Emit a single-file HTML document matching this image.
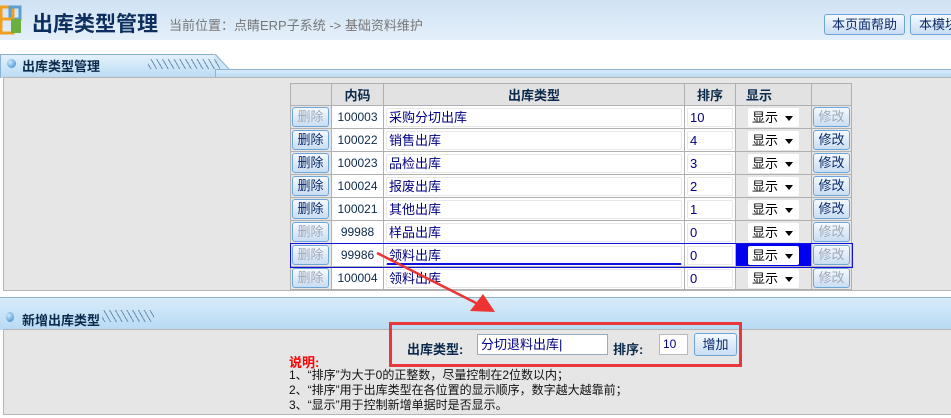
<!DOCTYPE html><html><head><meta charset="utf-8"><style>
*{margin:0;padding:0;box-sizing:border-box}
body{width:951px;height:418px;overflow:hidden;background:#fff;font-family:"Liberation Sans","Noto Sans CJK SC",sans-serif;font-size:12px;position:relative}
.abs{position:absolute}
.hdr{left:0;top:0;width:951px;height:40px;background:linear-gradient(#cfe2f4,#e4eff9)}
.btn{border:1px solid #6ea5d8;border-radius:3px;background:linear-gradient(#f4f9fe,#c9def3);color:#0b2a6b;font-size:13px;text-align:center}
.bar{left:0;width:951px;background:linear-gradient(#d5e9f8,#b6d9f3);border-top:1px solid #8cb3d1}
.tab{background:linear-gradient(#e4f1fb,#b9dbf4);border:1px solid #8cb3d1;border-bottom:none}
.body{background:#e6e6e6;border:1px solid #b5b5b5}
table{border-collapse:collapse;position:absolute;left:290px;top:83px}
td{border:1px solid #b0b0b0;height:22px;padding:0;font-size:12px;color:#0b2a4b}
th{border:1px solid #b0b0b0;height:22px;background:#e2e2e2;font-size:13px;color:#0b2a4b}
.w{background:#fff;text-align:center}
.inp{display:block;margin:1px 2px;height:19px;background:#fff;border:1px solid #e8e8e8;color:#000080;font-size:13px;line-height:18px;padding-left:2px;border-radius:2px}
.sb{display:block;margin:1px 12px 1px 12px;height:19px;background:#fff;border-radius:2px;font-size:13px;line-height:19px;padding-left:4px;position:relative;color:#000}
.sb:after{content:"";position:absolute;right:6px;top:8px;border:4px solid transparent;border-top:5px solid #000;border-bottom:0}
.b2{display:block;margin:1px 1px;height:20px;line-height:18px;width:37px}
.dis{color:#a0a8b8}
.stripe{background:repeating-linear-gradient(60deg,transparent 0 2px,#6b8fb0 2px 3px,transparent 3px 5px)}
</style></head><body>
<div class="abs hdr"></div>
<svg class="abs" style="left:0;top:3px" width="24" height="34" viewBox="0 0 24 34"><rect x="1" y="4" width="12" height="12" fill="none" stroke="#f0a020" stroke-width="3"/><rect x="10" y="4" width="10" height="12" fill="none" stroke="#5aa0d0" stroke-width="3"/><rect x="1" y="16" width="12" height="14" fill="none" stroke="#f0a020" stroke-width="3"/><rect x="11" y="16" width="10" height="14" fill="#6ab040"/></svg>
<div class="abs" style="left:32px;top:8px;font-size:21px;font-weight:bold;color:#0c2f5e">出库类型管理</div>
<div class="abs" style="left:169px;top:15px;font-size:13px;color:#777">当前位置：点睛ERP子系统 -&gt; 基础资料维护</div>
<div class="abs btn" style="left:824px;top:14px;width:81px;height:21px;line-height:19px">本页面帮助</div>
<div class="abs btn" style="left:910px;top:14px;width:60px;height:21px;line-height:19px;text-align:left;padding-left:8px">本模块</div>

<div class="abs bar" style="top:69px;height:9px"></div>
<div class="abs tab" style="left:0;top:54px;width:216px;height:24px"></div>
<svg class="abs" style="left:214px;top:54px" width="16" height="16"><polygon points="0,0 2,0 15,15 0,15" fill="#cfe6f8"/><line x1="1" y1="0" x2="15" y2="15" stroke="#8cb3d1"/></svg>
<div class="abs" style="left:7px;top:59px;width:9px;height:9px;border-radius:50%;background:radial-gradient(circle at 35% 35%,#cfeaff,#2a7fc8)"></div>
<div class="abs" style="left:22px;top:56px;font-size:13px;font-weight:bold;color:#0b2a4b">出库类型管理</div>
<div class="abs stripe" style="left:148px;top:59px;width:72px;height:10px"></div>
<div class="abs body" style="left:3px;top:77px;width:960px;height:214px"></div>

<table>
<tr><th style="width:41px"></th><th style="width:52px">内码</th><th style="width:301px">出库类型</th><th style="width:51px">排序</th><th style="width:76px;text-align:left;padding-left:10px">显示</th><th style="width:40px"></th></tr>
<tr><td><span class="btn b2 dis">删除</span></td><td class="w">100003</td><td class="w"><span class="inp" style="text-align:left">采购分切出库</span></td><td class="w"><span class="inp" style="text-align:left">10</span></td><td><span class="sb">显示</span></td><td><span class="btn b2 dis">修改</span></td></tr>
<tr><td><span class="btn b2">删除</span></td><td class="w">100022</td><td class="w"><span class="inp" style="text-align:left">销售出库</span></td><td class="w"><span class="inp" style="text-align:left">4</span></td><td><span class="sb">显示</span></td><td><span class="btn b2">修改</span></td></tr>
<tr><td><span class="btn b2">删除</span></td><td class="w">100023</td><td class="w"><span class="inp" style="text-align:left">品检出库</span></td><td class="w"><span class="inp" style="text-align:left">3</span></td><td><span class="sb">显示</span></td><td><span class="btn b2">修改</span></td></tr>
<tr><td><span class="btn b2">删除</span></td><td class="w">100024</td><td class="w"><span class="inp" style="text-align:left">报废出库</span></td><td class="w"><span class="inp" style="text-align:left">2</span></td><td><span class="sb">显示</span></td><td><span class="btn b2">修改</span></td></tr>
<tr><td><span class="btn b2">删除</span></td><td class="w">100021</td><td class="w"><span class="inp" style="text-align:left">其他出库</span></td><td class="w"><span class="inp" style="text-align:left">1</span></td><td><span class="sb">显示</span></td><td><span class="btn b2">修改</span></td></tr>
<tr><td><span class="btn b2 dis">删除</span></td><td class="w">99988</td><td class="w"><span class="inp" style="text-align:left">样品出库</span></td><td class="w"><span class="inp" style="text-align:left">0</span></td><td><span class="sb">显示</span></td><td><span class="btn b2 dis">修改</span></td></tr>
<tr style="outline:1px solid #1010e0"><td><span class="btn b2 dis">删除</span></td><td class="w">99986</td><td class="w"><span class="inp" style="text-align:left;border-bottom:2px solid #1010e0">领料出库</span></td><td class="w"><span class="inp" style="text-align:left">0</span></td><td style="background:#0000f0"><span class="sb">显示</span></td><td><span class="btn b2 dis">修改</span></td></tr>
<tr><td><span class="btn b2 dis">删除</span></td><td class="w">100004</td><td class="w"><span class="inp" style="text-align:left">领料出库</span></td><td class="w"><span class="inp" style="text-align:left">0</span></td><td><span class="sb">显示</span></td><td><span class="btn b2 dis">修改</span></td></tr>
</table>

<div class="abs bar" style="top:297px;height:33px;background:linear-gradient(#d8ebf9,#b7daf4)"></div>
<div class="abs" style="left:6px;top:312px;width:8px;height:10px;border-radius:50%;background:radial-gradient(circle at 35% 35%,#cfeaff,#2a7fc8)"></div>
<div class="abs" style="left:22px;top:310px;font-size:13px;font-weight:bold;color:#0b2a4b">新增出库类型</div>
<div class="abs stripe" style="left:102px;top:310px;width:52px;height:12px"></div>
<div class="abs body" style="left:3px;top:329px;width:960px;height:86px"></div>

<div class="abs" style="left:389px;top:322px;width:353px;height:45px;border:3px solid #e8383b"></div>
<div class="abs" style="left:407px;top:339px;font-size:13px;font-weight:bold;color:#0b2a4b">出库类型:</div>
<div class="abs" style="left:477px;top:334px;width:131px;height:21px;background:#fff;border:1px solid #9ab;color:#000080;font-size:13px;line-height:19px;padding-left:3px">分切退料出库|</div>
<div class="abs" style="left:613px;top:339px;font-size:13px;font-weight:bold;color:#0b2a4b">排序:</div>
<div class="abs" style="left:659px;top:334px;width:29px;height:21px;background:#fff;border:1px solid #bbb;color:#000080;font-size:12px;line-height:19px;padding-left:3px">10</div>
<div class="abs btn" style="left:694px;top:333px;width:43px;height:23px;line-height:21px">增加</div>

<div class="abs" style="left:289px;top:352px;font-size:13px;font-weight:bold;color:#f00">说明:</div>
<div class="abs" style="left:289px;top:368px;font-size:12px;line-height:15px;color:#111">1、“排序”为大于0的正整数，尽量控制在2位数以内；<br>2、“排序”用于出库类型在各位置的显示顺序，数字越大越靠前；<br>3、“显示”用于控制新增单据时是否显示。</div>

<svg class="abs" style="left:0;top:0" width="951" height="418"><line x1="377" y1="253" x2="478" y2="304" stroke="#ee3333" stroke-width="2.5"/><polygon points="495,312 470,311 483,294" fill="#ee3333"/></svg>
</body></html>
